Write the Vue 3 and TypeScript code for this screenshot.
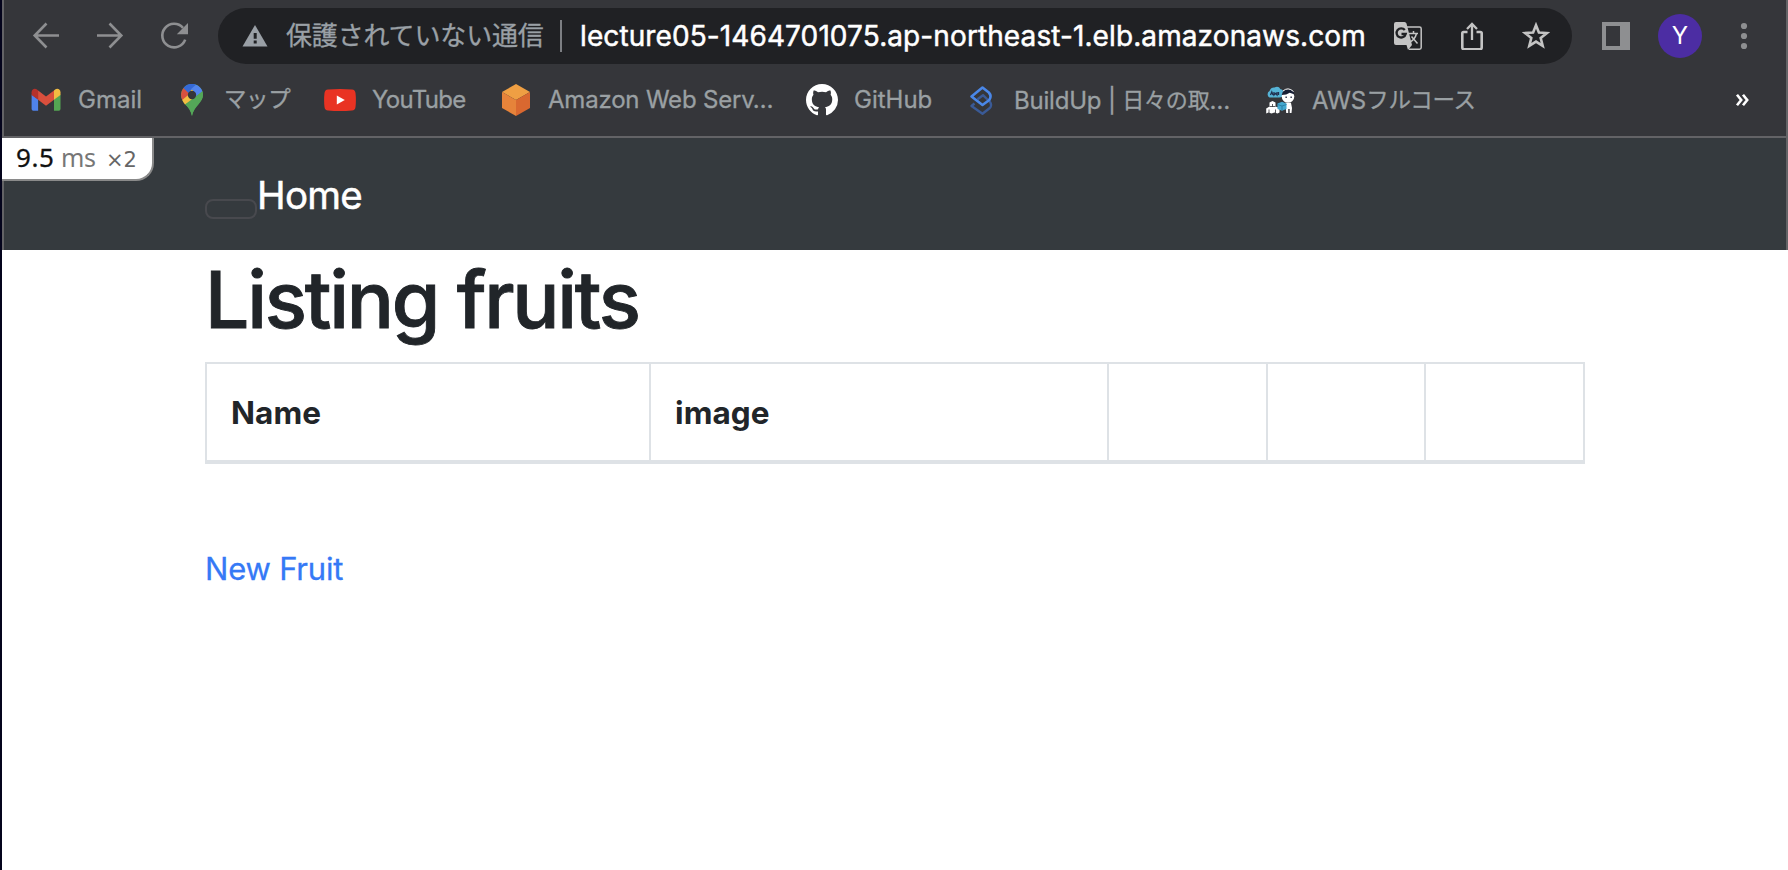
<script setup lang="ts">
interface Column {
  key: string
  label: string
}

const pageUrl = 'lecture05-1464701075.ap-northeast-1.elb.amazonaws.com'

const columns: Column[] = [
  { key: 'name', label: 'Name' },
  { key: 'image', label: 'image' },
  { key: 'show', label: '' },
  { key: 'edit', label: '' },
  { key: 'destroy', label: '' },
]
</script>

<template>
  <div class="window">
    <header class="chrome">
      <div class="toolbar">
        <nav class="history">
          <svg class="nav-icon" viewBox="0 0 32 32">
            <path d="M29 15.500H5M16.500 3.500L4.700 15.500l11.800 12" />
          </svg>
          <svg class="nav-icon" viewBox="0 0 32 32">
            <path d="M3 15.500h24M15.500 3.500L27.300 15.500l-11.800 12" />
          </svg>
          <svg class="nav-icon" viewBox="0 0 32 32">
            <path d="M27.200 19.600A11.800 11.800 0 1 1 25 7.800" />
            <path class="solid" d="M30 3v11.200H18.800z" />
          </svg>
        </nav>

        <div class="omnibox">
          <svg class="warning" viewBox="0 0 26 22">
            <path fill="#9aa0a6" d="M13 0l12.500 21.500H.5z" />
            <path fill="#202124" d="M11.700 8h3v5.700h-3zM11.700 15.500h3v3h-3z" />
          </svg>
          <span class="security">保護されていない通信</span>
          <span class="divider"></span>
          <span class="url">{{ pageUrl }}</span>

          <div class="actions">
            <svg viewBox="0 0 28 28">
              <path fill="none" stroke="#c4c4c4" stroke-width="1.500" d="M12 5h13.500q1.700 0 1.700 1.700v18.800q0 1.700-1.700 1.700H15" />
              <path fill="#c4c4c4" d="M2 0h8.500q1.500 0 2 1.500L18 23l-4 5-1.500-5H2q-2 0-2-2V2q0-2 2-2z" />
              <path fill="none" stroke="#202124" stroke-width="2.300" d="M10.800 8A4.600 4.600 0 1 0 11.700 12H7.500" />
              <path fill="none" stroke="#c4c4c4" stroke-width="1.500" d="M15 11.500h9M19.500 9v2.500M22.500 11.500q-1.500 6-6.500 8.500M17.500 14.500l6 7" />
            </svg>
            <svg viewBox="0 0 28 28">
              <path fill="none" stroke="#c4c4c4" stroke-width="2.600" stroke-linejoin="round" d="M9.500 10H5.500q-1.200 0-1.200 1.200v14.300q0 1.700 1.700 1.700h16q1.700 0 1.700-1.700V11.200q0-1.200-1.200-1.200h-4" />
              <path fill="none" stroke="#c4c4c4" stroke-width="2.300" d="M14 18V2.500M9 7l5-5 5 5" />
            </svg>
            <svg viewBox="0 0 28 28">
              <path fill="none" stroke="#c4c4c4" stroke-width="2.600" d="M14 3.200l2.900 7.300 8 .500-6.200 5.100 2 7.700L14 19.600l-6.700 4.200 2-7.700L3.100 11l8-.500z" />
            </svg>
          </div>
        </div>

        <svg class="panel" viewBox="0 0 28 28">
          <path fill="#8e8f91" fill-rule="evenodd" d="M0 0h28v28H0zM4 4v20h14V4z" />
        </svg>
        <span class="avatar">Y</span>
        <svg class="more" viewBox="0 0 8 28">
          <g fill="#8e8f91">
            <circle cx="4" cy="4" r="3.100" />
            <circle cx="4" cy="14" r="3.100" />
            <circle cx="4" cy="24" r="3.100" />
          </g>
        </svg>
      </div>

      <div class="bookmarks">
        <a class="bookmark">
          <svg viewBox="0 0 32 32">
            <path fill="#4f83ec" d="M1.600 10.500l6.500 4.800v11.500H3.300q-1.700 0-1.700-1.700z" />
            <path fill="#54a553" d="M24 15.300l6.500-4.800v14.600q0 1.700-1.700 1.700H24z" />
            <path fill="#b5312b" d="M1.600 11V8.200c0-3 3.200-4.300 5.400-2.600l1.100.9v9.300z" />
            <path fill="#f3bc42" d="M30.500 11V8.200c0-3-3.200-4.300-5.400-2.600l-1.100.9v9.300z" />
            <path fill="#d94f3d" d="M8.100 6.500l7.900 6 8-6v9.300l-8 6-7.900-6z" />
          </svg>
          <span>Gmail</span>
        </a>

        <a class="bookmark">
          <svg viewBox="0 0 32 32">
            <path fill="#54a658" d="M16 0a11 11 0 0 1 11 11c0 8-8.500 10-11 21C13.500 21 5 19 5 11A11 11 0 0 1 16 0z" />
            <path fill="#f3bd42" d="M6 15.500L16 4.500 20 14 9 20.500Q7 18 6 15.500z" />
            <path fill="#d9503f" d="M7.500 4L14 9.500 6.200 16Q3.400 9.500 7.500 4z" />
            <path fill="#3569d6" d="M7.500 4C11-.800 17-.900 20 .7L12.500 9z" />
            <path fill="#5284ed" d="M20 .7q4.500 1.500 6.400 6.600L16 18l1-12-2.500-.500z" />
            <path fill="#54a658" d="M26.400 7.300C29.500 18 18 20 16 32 15 27 13 23 9 20.500z" />
            <circle cx="16" cy="11" r="4.200" fill="#35363a" />
          </svg>
          <span class="kana">マップ</span>
        </a>

        <a class="bookmark">
          <svg viewBox="0 0 32 32">
            <path fill="#e93323" d="M4 5.400q12-1 24 0 3.200.4 3.500 3.600.8 7 0 14-.3 3.200-3.500 3.600-12 1-24 0Q.8 26.200.5 23q-.8-7 0-14Q.8 5.800 4 5.400z" />
            <path fill="#fff" d="M12.800 11.400l8 4.600-8 4.600z" />
          </svg>
          <span class="youtube">YouTube</span>
        </a>

        <a class="bookmark">
          <svg viewBox="0 0 32 32">
            <path fill="#ef9f43" d="M16 0l14 8-14 8L2 8z" />
            <path fill="#e6833a" d="M2 8l14 8v16L2 24z" />
            <path fill="#d96830" d="M30 8l-14 8v16l14-8z" />
          </svg>
          <span class="aws">Amazon Web Serv…</span>
        </a>

        <a class="bookmark">
          <svg viewBox="0 0 16 16">
            <path fill="#fff" d="M8 0C3.580 0 0 3.580 0 8c0 3.540 2.290 6.530 5.470 7.590.4.070.550-.170.550-.380 0-.190-.010-.820-.010-1.490-2.010.370-2.530-.490-2.690-.940-.090-.230-.480-.940-.820-1.130-.280-.150-.680-.520-.010-.530.630-.010 1.080.580 1.230.820.720 1.210 1.870.870 2.330.660.070-.520.280-.870.510-1.070-1.780-.200-3.640-.890-3.640-3.950 0-.870.310-1.590.820-2.150-.080-.200-.360-1.020.080-2.120 0 0 .670-.210 2.200.820.640-.180 1.320-.270 2-.270s1.360.090 2 .270c1.530-1.040 2.200-.820 2.200-.820.440 1.100.160 1.920.080 2.120.510.560.820 1.270.820 2.150 0 3.070-1.870 3.750-3.650 3.950.290.250.540.730.540 1.480 0 1.070-.010 1.930-.010 2.200 0 .210.150.460.550.380A8.010 8.010 0 0 0 16 8c0-4.420-3.580-8-8-8z" />
          </svg>
          <span>GitHub</span>
        </a>

        <a class="bookmark">
          <svg viewBox="0 0 32 32">
            <path fill="none" stroke="#3a5a96" stroke-width="2.400" stroke-linejoin="round" d="M9.500 19.500l-3 2.500 11 7.800 7-5.500q3-2.800.5-6.300l-7-6.800-5.500 4" />
            <path fill="none" stroke="#4a87e8" stroke-width="2.600" stroke-linejoin="round" d="M6.500 12.500L17.500 3.500l6.300 5q3.200 3.500.5 7.500l-6.800 5z" />
          </svg>
          <span class="buildup">BuildUp | <span class="kanji">日々の取</span>…</span>
        </a>

        <a class="bookmark">
          <svg viewBox="0 0 32 32">
            <path fill="#55b3d6" d="M5.500 13.500a3.700 3.700 0 0 1 0-6.500Q7 3 10.500 3.500q4-2 6 1.800 3.300.4 2.800 4 .2 4.200-4 4.200z" />
            <path fill="none" stroke="#203050" stroke-width="1.300" d="M6.500 11l1.300-3 1.200 3M10 8v3l1.500-1.500L13 11V8M14.500 8v3" />
            <circle cx="24" cy="12.500" r="6.300" fill="#fff" />
            <path fill="#171f35" d="M17.700 11q1-5.500 6.500-5.500t6 5l-1.500-.700-3-1-3.500 1.700z" />
            <path fill="none" stroke="#fff" stroke-width="1" d="M19 7q5-4.500 10.500.5" />
            <path fill="#171f35" d="M21.500 12.500h1.300V14h-1.300zM26.500 12.500h1.300V14h-1.300z" />
            <path fill="#fff" d="M21.500 19h5.500l1 5-.5 5h-1.800v-4h-1.500v4h-2zM5.500 18.500l3-1.500 3 1.500v4l4 1.500v4.500l-2 1-3-1-3 1-3-1-2.300 1V24.500l3.300-2z" />
            <path fill="none" stroke="#35363a" stroke-width=".800" d="M8.500 20v3M5 25.500v3.500M11.500 25.500v3.500M5.500 22.500h6" />
            <path fill="#45a8cf" d="M13.500 19.500l4.500-1.800 4.500 1.800v5.500L18 26.800 13.500 25z" />
            <path fill="none" stroke="#237a9f" stroke-width=".800" d="M13.500 20.500L18 22l4.500-1.500M18 22v4" />
          </svg>
          <span>AWS<span class="katakana">フルコース</span></span>
        </a>

        <svg class="overflow" viewBox="0 0 14 14">
          <path fill="none" stroke="#fff" stroke-width="2.600" d="M2 1.800L6.200 7 2 12.200M8 1.800L12.200 7 8 12.200" />
        </svg>
      </div>
    </header>

    <div class="navbar">
      <button class="toggler" type="button"></button>
      <a class="brand">Home</a>
      <div class="profiler">
        <span class="time">9.5</span>
        <span class="unit">ms</span>
        <span class="count">×2</span>
      </div>
    </div>

    <main class="content">
      <h1>Listing fruits</h1>
      <table>
        <thead>
          <tr>
            <th v-for="column in columns" :key="column.key" :class="column.key">{{ column.label }}</th>
          </tr>
        </thead>
      </table>
      <a class="new-link">New Fruit</a>
    </main>
  </div>
</template>

<style>
body {
  margin: 0;
  overflow: hidden;
}
</style>

<style scoped>
.window {
  box-sizing: border-box;
  width: 1788px;
  height: 870px;
  border-left: 2px solid #04041c;
  background: #fff;
  color: #212529;
  font-family: Inter, "Noto Sans CJK JP", sans-serif;
}

.chrome {
  box-sizing: border-box;
  height: 138px;
  border: solid #636366;
  border-width: 0 2px 2px;
  background: #35363a;
}

.toolbar {
  display: flex;
  align-items: center;
  height: 72px;
  padding-left: 26px;
}

.history {
  display: flex;
  gap: 32px;
  width: 188px;
}

.nav-icon {
  flex: none;
  width: 32px;
  height: 32px;
  fill: none;
  stroke: #8e8f91;
  stroke-width: 2.6;
}

.nav-icon .solid {
  fill: #8e8f91;
  stroke: none;
}

.omnibox {
  display: flex;
  align-items: center;
  box-sizing: border-box;
  width: 1354px;
  height: 56px;
  padding-left: 24px;
  border-radius: 28px;
  background: #202124;
  white-space: nowrap;
}

.warning {
  width: 26px;
  height: 22px;
}

.security {
  width: 274px;
  margin-left: 18px;
  color: #9aa0a6;
  font-size: 26px;
  line-height: 32px;
  letter-spacing: -0.15px;
  -webkit-text-stroke: 0.3px currentColor;
}

.divider {
  width: 2px;
  height: 32px;
  background: #7d7f83;
}

.url {
  width: 814px;
  margin-left: 18px;
  color: #fff;
  font-size: 28px;
  line-height: 40px;
  letter-spacing: 0.1px;
  -webkit-text-stroke: 0.5px currentColor;
}

.actions {
  display: flex;
  gap: 36px;
}

.actions svg {
  width: 28px;
  height: 28px;
}

.panel {
  width: 28px;
  height: 28px;
  margin-left: 30px;
}

.avatar {
  width: 44px;
  height: 44px;
  margin-left: 28px;
  border-radius: 50%;
  background: #4c2da3;
  color: #fff;
  font-size: 24px;
  line-height: 44px;
  text-align: center;
}

.more {
  width: 8px;
  height: 28px;
  margin-left: 38px;
}

.bookmarks {
  display: grid;
  grid-template-columns: 146px 148px 176px 306px 159px 299px 471px 14px;
  align-items: center;
  height: 56px;
  padding-left: 26px;
}

.bookmark {
  display: flex;
  align-items: center;
  gap: 16px;
  color: #9aa0a3;
  font-size: 24px;
  line-height: 32px;
  white-space: nowrap;
  -webkit-text-stroke: 0.3px currentColor;
}

.bookmark svg {
  flex: none;
  width: 32px;
  height: 32px;
}

.kana,
.katakana {
  font-size: 22.5px;
}

.kana {
  padding-bottom: 2px;
  letter-spacing: -0.4px;
}

.katakana {
  letter-spacing: -0.3px;
  vertical-align: 1px;
}

.buildup {
  padding-left: 1px;
  letter-spacing: -0.2px;
}

.kanji {
  font-size: 22px;
  letter-spacing: -0.2px;
  vertical-align: 1px;
}

.youtube {
  letter-spacing: -0.7px;
}

.aws {
  letter-spacing: -0.2px;
}

.overflow {
  width: 14px;
  height: 14px;
}

.navbar {
  position: relative;
  display: flex;
  align-items: flex-start;
  box-sizing: border-box;
  height: 112px;
  padding-left: 201px;
  border: solid #636366;
  border-width: 0 2px;
  background: #353a3e;
}

.toggler {
  width: 52px;
  height: 20px;
  margin: 61px 0 0;
  padding: 0;
  border: 2px solid #48494e;
  border-radius: 8px;
  background: transparent;
}

.brand {
  margin-top: 33px;
  color: #fff;
  font-size: 38.5px;
  line-height: 48px;
  letter-spacing: -0.7px;
  -webkit-text-stroke: 0.5px currentColor;
}

.profiler {
  position: absolute;
  top: 0;
  left: -2px;
  display: flex;
  align-items: baseline;
  box-sizing: border-box;
  width: 152px;
  height: 43px;
  padding-left: 14px;
  border: solid #8a8a8a;
  border-width: 0 2px 2px 0;
  border-radius: 0 0 18px 0;
  background: #fff;
  line-height: 38px;
}

.time {
  width: 45px;
  color: #111;
  font-family: "Noto Sans", sans-serif;
  font-size: 26px;
  letter-spacing: 0.6px;
  -webkit-text-stroke: 0.3px currentColor;
}

.unit {
  width: 45px;
  color: #777;
  font-family: "Noto Sans", sans-serif;
  font-size: 25px;
  letter-spacing: -0.4px;
}

.count {
  color: #666;
  font-family: "DejaVu Sans", sans-serif;
  font-size: 21px;
}

.content {
  padding-left: 203px;
}

h1 {
  margin: 0;
  padding-top: 2px;
  font-size: 78.5px;
  font-weight: 500;
  line-height: 96px;
  letter-spacing: -2.25px;
  -webkit-text-stroke: 0.9px currentColor;
}

table {
  width: 1380px;
  margin: 14px 0 0;
  border-spacing: 0;
  border-left: 2px solid #dee2e6;
  table-layout: fixed;
}

th {
  box-sizing: border-box;
  height: 102px;
  padding: 2px 24px 0;
  border: solid #dee2e6;
  border-width: 2px 2px 4px 0;
  font-size: 31.5px;
  font-weight: 700;
  line-height: 48px;
  letter-spacing: 0.1px;
  text-align: left;
}

.name {
  width: 444px;
}

.image {
  width: 458px;
}

.show {
  width: 159px;
}

.edit {
  width: 158px;
}

.new-link {
  display: block;
  margin-top: 81px;
  color: #3579f6;
  font-size: 31px;
  line-height: 48px;
  letter-spacing: -0.2px;
  -webkit-text-stroke: 0.3px currentColor;
}
</style>
